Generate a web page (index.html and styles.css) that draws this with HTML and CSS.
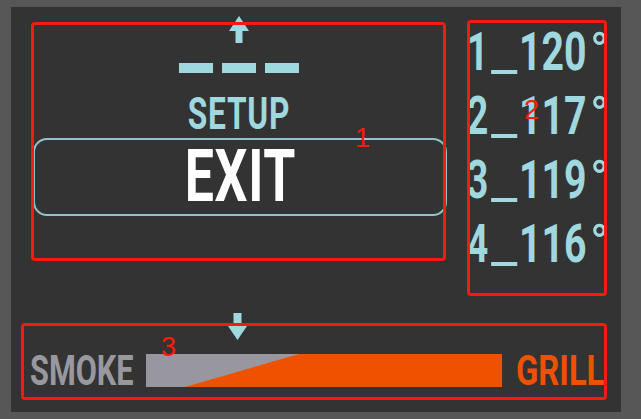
FILE: index.html
```html
<!DOCTYPE html>
<html>
<head>
<meta charset="utf-8">
<link rel="stylesheet" href="styles.css">
</head>
<body>
<div class="screen">
  <div class="top">
    <section class="box menu">
      <svg class="up-arrow" width="20" height="27" viewBox="0 0 20 27"><polygon points="10,0 20,15 0,15" fill="#9fd8de"/><rect x="6.5" y="15" width="7" height="12" fill="#9fd8de"/></svg>
      <div class="dashes"><span></span><span></span><span></span></div>
      <div class="setup"><span>SETUP</span></div>
      <div class="exit"><span>EXIT</span></div>
      <span class="tag tag1">1</span>
    </section>
    <section class="box temps">
      <div class="row"><span class="n">1</span><span class="us">_</span><span class="v">120</span><span class="deg">°</span></div>
      <div class="row"><span class="n">2</span><span class="us">_</span><span class="v">117</span><span class="deg">°</span></div>
      <div class="row"><span class="n">3</span><span class="us">_</span><span class="v">119</span><span class="deg">°</span></div>
      <div class="row"><span class="n">4</span><span class="us">_</span><span class="v">116</span><span class="deg">°</span></div>
      <span class="tag tag2">2</span>
    </section>
  </div>
  <section class="box mode">
    <svg class="down-arrow" width="19" height="27" viewBox="0 0 19 27"><rect x="5.5" y="0" width="8" height="13" fill="#9fd8de"/><polygon points="0,13 19,13 9.5,27" fill="#9fd8de"/></svg>
    <div class="mode-row">
      <span class="label smoke"><span>SMOKE</span></span>
      <svg class="bar" width="356" height="33" viewBox="0 0 356 33" preserveAspectRatio="none"><rect x="0" y="0" width="356" height="33" fill="#98969e"/><polygon points="153,0 356,0 356,33 39,33" fill="#ee5200"/></svg>
      <span class="label grill"><span>GRILL</span></span>
    </div>
    <span class="tag tag3">3</span>
  </section>
</div>
</body>
</html>
```
FILE: styles.css
```css
html, body {
  margin: 0;
}
body {
  width: 641px;
  height: 419px;
  box-sizing: border-box;
  padding: 7px 20px 7px 11px;
  background: #575757;
  font-family: Roboto, "Liberation Sans", sans-serif;
  overflow: hidden;
}
.screen {
  height: 405px;
  box-sizing: border-box;
  background: #333333;
  padding: 13px 14px 0 10px;
}
.top {
  display: flex;
  align-items: flex-start;
}
.box {
  position: relative;
  box-sizing: border-box;
  border: 3px solid transparent;
}
.box::after {
  content: "";
  position: absolute;
  inset: -3px;
  border: 3px solid #f61b10;
  border-radius: 4px;
  pointer-events: none;
}
.menu {
  margin: 2px 0 0 10px;
  width: 415px;
  height: 239px;
  display: flex;
  flex-direction: column;
  align-items: center;
}
.up-arrow {
  display: block;
  margin-top: -9px;
}
.dashes {
  margin-top: 20px;
  display: flex;
  gap: 9px;
}
.dashes span {
  width: 34px;
  height: 10px;
  background: #9fd8de;
}
.setup {
  margin-top: 19px;
  height: 44px;
  font-size: 44px;
  line-height: 44px;
  font-weight: 700;
  color: #9fd8de;
}
.setup span, .exit span {
  display: inline-block;
  transform: scaleX(0.72);
  letter-spacing: 1px;
}
.exit {
  margin: 2px -4px 0 -1px;
  align-self: stretch;
  height: 78px;
  box-sizing: border-box;
  border: 2px solid #8cc5ca;
  border-radius: 14px;
  padding-top: 1px;
  text-align: center;
  font-size: 72px;
  line-height: 72px;
  font-weight: 700;
  color: #ffffff;
}
.temps {
  margin-left: 21px;
  width: 140px;
  height: 276px;
}
.row {
  height: 64px;
  margin-left: -3px;
  display: flex;
  font-size: 53px;
  line-height: 64px;
  font-weight: 700;
  color: #9fd8de;
  white-space: nowrap;
}
.row:first-of-type {
  margin-top: -3px;
}
.row span {
  display: block;
  flex: none;
  transform-origin: left center;
}
.row .n {
  width: 24px;
  transform: scaleX(0.7);
}
.row .us {
  width: 28px;
  font-weight: 400;
  transform: scaleX(1.1);
}
.row .v {
  width: 71px;
  transform: scaleX(0.74);
}
.row .deg {
  font-weight: 400;
  transform: scaleX(0.95);
}
.mode {
  margin-top: 27px;
  width: 586px;
  height: 77px;
  display: flex;
  flex-direction: column;
}
.down-arrow {
  display: block;
  margin: -13px 0 0 204px;
}
.mode-row {
  margin-top: 14px;
  padding-left: 6px;
  height: 33px;
  display: flex;
  align-items: center;
  gap: 14px;
}
.label {
  display: block;
  font-size: 42px;
  line-height: 33px;
  font-weight: 700;
  white-space: nowrap;
}
.label span {
  display: inline-block;
  transform: scaleX(0.73);
  transform-origin: left center;
}
.smoke {
  width: 102px;
  color: #9a989f;
}
.grill {
  width: 87px;
  color: #ee5200;
}
.grill span {
  transform: scaleX(0.78);
}
.bar {
  display: block;
  flex: none;
}
.tag {
  position: absolute;
  z-index: 2;
  font-family: "Liberation Sans", sans-serif;
  font-size: 27px;
  line-height: 27px;
  color: #ff1a0a;
}
.tag1 { left: 321px; top: 100px; }
.tag2 { left: 54px; top: 74px; }
.tag3 { left: 137px; top: 8px; }
```
